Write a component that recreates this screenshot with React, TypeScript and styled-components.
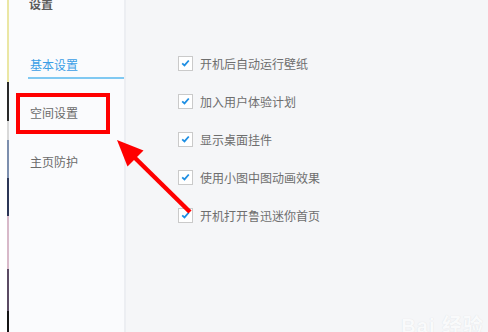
import React from "react";
import styled, { createGlobalStyle } from "styled-components";

const GlobalStyle = createGlobalStyle`
  html, body {
    margin: 0;
    padding: 0;
    width: 488px;
    height: 332px;
    overflow: hidden;
    background: #ffffff;
  }
  body {
    font-family: "Noto Sans CJK SC", "Noto Sans", sans-serif;
  }
`;

const Screen = styled.div`
  position: relative;
  display: flex;
  width: 488px;
  height: 332px;
  overflow: hidden;
`;

// strip of desktop behind the window
const DesktopEdge = styled.div`
  width: 7px;
  flex: none;
  background: #ffffff;
  border-right: 2px solid transparent;
  border-image: linear-gradient(
      #ebe7a4 0px, #ebe7a4 83px,
      #2a2a2a 83px, #2a2a2a 121px,
      #d9d9d9 121px, #d9d9d9 140px,
      #7d8fae 140px, #7d8fae 178px,
      #2c3656 178px, #2c3656 216px,
      #d8b9c9 216px, #d8b9c9 268px,
      #5b4a63 268px, #5b4a63 310px,
      #141414 310px
    ) 1;
`;

const Sidebar = styled.aside`
  width: 117px;
  flex: none;
  box-sizing: border-box;
  display: flex;
  flex-direction: column;
  padding-left: 19px;
  background: #fafbfd;
  border-right: 2px solid #eceef2;
`;

const Title = styled.div`
  margin-top: -4px;
  padding-left: 1px;
  font-size: 12px;
  line-height: 16px;
  font-weight: 700;
  color: #5a5a5a;
`;

const NavItem = styled.div<{ active?: boolean; gap: number }>`
  margin-top: ${({ gap }) => gap}px;
  padding-left: 2px;
  font-size: 12px;
  line-height: 24px;
  color: ${({ active }) => (active ? "#3b9ee6" : "#6b6b6b")};
  border-bottom: 2px solid ${({ active }) => (active ? "#80c9f2" : "transparent")};
`;

const Content = styled.main`
  flex: 1;
  display: flex;
  flex-direction: column;
  padding-top: 44px;
  padding-left: 52px;
  background: #f5f6f8;
`;

const OptionRow = styled.label`
  display: flex;
  align-items: center;
  gap: 7px;
  height: 38px;
  font-size: 12px;
  color: #6e6e6e;
`;

const Box = styled.span`
  width: 15px;
  height: 15px;
  box-sizing: border-box;
  border: 1px solid #cacaca;
  background: #ffffff;
  display: flex;
  align-items: center;
  justify-content: center;
`;

const RedFrame = styled.div`
  position: absolute;
  left: 16px;
  top: 93px;
  width: 94px;
  height: 41px;
  box-sizing: border-box;
  border: 4px solid #ff0000;
`;

const ArrowLayer = styled.svg`
  position: absolute;
  left: 0;
  top: 0;
  pointer-events: none;
`;

const Watermark = styled.div`
  position: absolute;
  right: 4px;
  bottom: -7px;
  font-family: "Liberation Sans", "Noto Sans CJK SC", sans-serif;
  font-size: 20px;
  font-weight: 700;
  color: #f9fafb;
  text-shadow: 0 0 1px #d9dce1;
  letter-spacing: 1px;
`;

const options = [
  "开机后自动运行壁纸",
  "加入用户体验计划",
  "显示桌面挂件",
  "使用小图中图动画效果",
  "开机打开鲁迅迷你首页",
];

const Check = () => (
  <svg width="9" height="8" viewBox="0 0 9 8">
    <path d="M1.2 4.3 L3.5 6.4 L7.8 1.5" fill="none" stroke="#1f8fe3" strokeWidth="1.8" />
  </svg>
);

export default function App() {
  return (
    <>
      <GlobalStyle />
      <Screen>
        <DesktopEdge />
        <Sidebar>
          <Title>设置</Title>
          <NavItem active gap={41}>基本设置</NavItem>
          <NavItem gap={22}>空间设置</NavItem>
          <NavItem gap={23}>主页防护</NavItem>
        </Sidebar>
        <Content>
          {options.map((text) => (
            <OptionRow key={text}>
              <Box>
                <Check />
              </Box>
              {text}
            </OptionRow>
          ))}
        </Content>

        <RedFrame />
        <ArrowLayer width="488" height="332" viewBox="0 0 488 332">
          <line x1="190" y1="212" x2="131" y2="154" stroke="#ff0000" strokeWidth="4.5" />
          <polygon points="117,140 143.5,150.5 127.5,166.5" fill="#ff0000" />
        </ArrowLayer>
        <Watermark>Bai 经验</Watermark>
      </Screen>
    </>
  );
}
